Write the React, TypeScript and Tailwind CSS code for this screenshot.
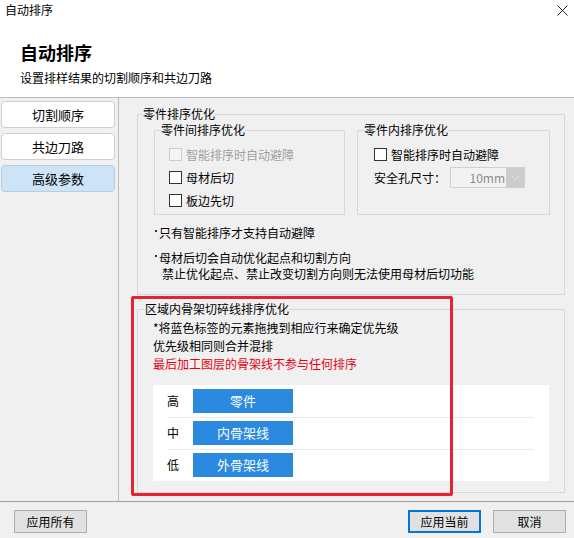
import React from "react"

const tabs = ["切割顺序", "共边刀路", "高级参数"]

function Checkbox({ label, disabled }: { label: string; disabled?: boolean }) {
  return (
    <div className="flex h-[23px] items-center">
      <span
        className={
          disabled
            ? "h-[13px] w-[13px] border border-[#cccccc] bg-[#f4f4f4]"
            : "h-[13px] w-[13px] border border-[#333333] bg-white"
        }
      />
      <span className={disabled ? "ml-[4px] text-[#a0a0a0]" : "ml-[4px]"}>{label}</span>
    </div>
  )
}

function Dot() {
  return (
    <span className="flex w-[4px] self-start pt-[5px]">
      <span className="h-[2px] w-[2px] bg-[#333333]" />
    </span>
  )
}

const priorities = [
  { level: "高", name: "零件" },
  { level: "中", name: "内骨架线" },
  { level: "低", name: "外骨架线" },
]

export default function App() {
  return (
    <div className="relative flex h-[538px] w-[574px] flex-col overflow-hidden bg-white font-['Noto_Sans_CJK_SC','Noto_Sans',sans-serif] text-[12px] leading-[16px] text-black">
      {/* title bar */}
      <div className="flex h-[20px] items-center justify-between pl-[5px] pr-[6px]">
        <span>自动排序</span>
        <svg width="11" height="11" viewBox="0 0 11 11">
          <path d="M0.5 0.5 L10.5 10.5 M10.5 0.5 L0.5 10.5" stroke="#222" strokeWidth="1" />
        </svg>
      </div>

      {/* header */}
      <div className="h-[77px] pl-[20px]">
        <div className="mt-[20px] text-[18px] font-bold leading-[24px]">自动排序</div>
        <div className="mt-[6px]">设置排样结果的切割顺序和共边刀路</div>
      </div>
      <div className="h-px bg-[#b4bcc6]" />

      <div className="flex h-[403px]">
        {/* left tabs */}
        <div className="flex w-[119px] flex-col gap-[5px] border-r border-[#bdbdbd] bg-[#f0f0f0] pl-[1px] pt-[3px]">
          {tabs.map((t, i) => (
            <div
              key={t}
              className={
                i === 2
                  ? "flex h-[27px] w-[114px] items-center justify-center rounded-[4px] border border-[#b5cde3] bg-[#cde4f7] text-[13px]"
                  : "flex h-[27px] w-[114px] items-center justify-center rounded-[4px] border border-[#cfcfcf] bg-white text-[13px]"
              }
            >
              {t}
            </div>
          ))}
        </div>

        {/* content */}
        <div className="flex flex-1 flex-col bg-[#f0f0f0] pl-[18px] pr-[9px]">
          <fieldset className="mt-[8px] border border-[#d8d8d8] pb-[12px] pl-[5px]">
            <legend>零件排序优化</legend>
            <div className="ml-[11px] flex gap-[12px]">
              <fieldset className="w-[191px] border border-[#d8d8d8] pb-[2px] pl-[6px]">
                <legend>零件间排序优化</legend>
                <div className="pl-[8px] pt-[5px]">
                  <Checkbox label="智能排序时自动避障" disabled />
                  <Checkbox label="母材后切" />
                  <Checkbox label="板边先切" />
                </div>
              </fieldset>
              <fieldset className="w-[193px] border border-[#d8d8d8] pb-[25px] pl-[6px]">
                <legend>零件内排序优化</legend>
                <div className="pl-[10px] pt-[5px]">
                  <Checkbox label="智能排序时自动避障" />
                  <div className="flex h-[23px] items-center">
                    <span>安全孔尺寸：</span>
                    <div className="ml-[4px] flex h-[21px] w-[75px] border border-[#d0d0d0] bg-[#f2f2f2]">
                      <span className="flex flex-1 items-center justify-end pr-[1px] text-[#8c8c8c]">10mm</span>
                      <span className="flex w-[18px] items-center justify-center bg-[#cccccc]">
                        <svg width="9" height="5" viewBox="0 0 9 5">
                          <path d="M0.5 0.5 L4.5 4.5 L8.5 0.5" stroke="#e6e6e6" fill="none" strokeWidth="1" />
                        </svg>
                      </span>
                    </div>
                  </div>
                </div>
              </fieldset>
            </div>

            <div className="ml-[12px] mt-[10px] flex">
              <Dot />
              <span>只有智能排序才支持自动避障</span>
            </div>
            <div className="ml-[12px] mt-[9px] flex">
              <Dot />
              <div>
                <div>母材后切会自动优化起点和切割方向</div>
                <div className="pl-[3px]">禁止优化起点、禁止改变切割方向则无法使用母材后切功能</div>
              </div>
            </div>
          </fieldset>

          <fieldset className="mt-[6px] border border-[#d8d8d8] pb-[11px] pl-[7px]">
            <legend>区域内骨架切碎线排序优化</legend>
            <div className="ml-[8px] mt-[2px]">
              <div className="h-[18px] leading-[18px]">*将蓝色标签的元素拖拽到相应行来确定优先级</div>
              <div className="h-[18px] leading-[18px]">优先级相同则合并混排</div>
              <div className="h-[18px] leading-[18px] text-[#e60012]">最后加工图层的骨架线不参与任何排序</div>
              <div className="mt-[12px] w-[396px] bg-white py-[4px]">
                {priorities.map((p, i) => (
                  <div key={p.level}>
                    {i > 0 && (
                      <div className="h-[8px] pt-[4px]">
                        <div className="ml-[15px] h-px w-[366px] bg-[#ebebeb]" />
                      </div>
                    )}
                    <div className="flex h-[24px] items-center">
                      <span className="ml-[14px] w-[12px]">{p.level}</span>
                      <span className="ml-[14px] flex h-[24px] w-[100px] items-center justify-center bg-[#2b89e0] text-[13px] text-white">
                        {p.name}
                      </span>
                    </div>
                  </div>
                ))}
              </div>
            </div>
          </fieldset>
        </div>
      </div>

      <div className="h-px bg-[#a0a0a0]" />
      {/* footer */}
      <div className="flex flex-1 items-start bg-[#f0f0f0] pl-[14px] pr-[8px] pt-[8px]">
        <button className="h-[23px] w-[73px] border border-[#adadad] bg-[#e1e1e1] text-[12px]">应用所有</button>
        <div className="flex-1" />
        <button className="h-[23px] w-[73px] border-2 border-[#0078d7] bg-[#e1e1e1] text-[12px]">应用当前</button>
        <button className="ml-[12px] h-[23px] w-[73px] border border-[#adadad] bg-[#e1e1e1] text-[12px]">取消</button>
      </div>

      {/* red annotation frame */}
      <div className="absolute left-[131px] top-[296px] h-[200px] w-[322px] rounded-[2px] border-[3px] border-[#e42431]" />
    </div>
  )
}
